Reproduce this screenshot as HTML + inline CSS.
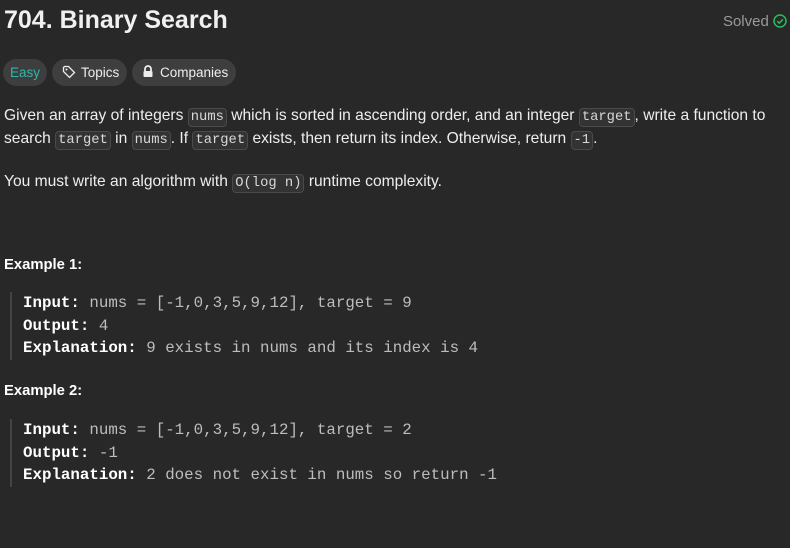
<!DOCTYPE html>
<html><head><style>
body{margin:0;background:#282828;width:790px;height:548px;overflow:hidden;font-family:"Liberation Sans",sans-serif;color:#eff1f6;position:relative}
.a{position:absolute;white-space:nowrap}
h1{position:absolute;left:4px;top:6px;margin:0;font-size:25px;font-weight:600;color:#f0f0f0}
.pill{position:absolute;top:59px;height:27px;border-radius:14px;background:#3e3e3e;font-size:13.5px;line-height:27px;color:#eee}
.p{font-size:15.6px;color:#eee;line-height:23px}
code{font-family:"Liberation Mono",monospace;font-size:13.8px;background:#333;border:1px solid #4a4a4a;border-radius:4px;padding:1px 2px;color:#d8d8d8}
.ex{font-size:14.8px;font-weight:bold;color:#fff}
.pre{position:absolute;left:10px;border-left:2px solid #444;padding-left:11px;font-family:"Liberation Mono",monospace;font-size:15.8px;line-height:22.5px;color:#bdbdbd;white-space:pre}
.pre b{color:#fff}
</style></head><body>
<h1>704. Binary Search</h1>
<div class="a" style="right:3px;top:13px;font-size:15px;color:#9a9a9a">Solved <svg width="14" height="14" viewBox="0 0 14 14" style="vertical-align:-2px"><circle cx="7" cy="7" r="6" fill="none" stroke="#2cbb5d" stroke-width="1.5"/><path d="M4.3 7.2l2 2 3.6-3.8" fill="none" stroke="#2cbb5d" stroke-width="1.5"/></svg></div>
<div class="pill" style="left:3px;width:44px;text-align:center;color:#2db8a8">Easy</div>
<div class="pill" style="left:52px;width:75px"><svg width="14" height="14" viewBox="0 0 14 14" style="position:absolute;left:10px;top:6px"><path d="M1.5 2.5v4l6 6 5-5-6-6h-4z" fill="none" stroke="#eee" stroke-width="1.3"/><circle cx="4.5" cy="4.5" r="1" fill="#eee"/></svg><span style="position:absolute;left:29px">Topics</span></div>
<div class="pill" style="left:132px;width:104px"><svg width="12" height="13" viewBox="0 0 12 13" style="position:absolute;left:10px;top:6px"><path d="M3 6V4a3 3 0 0 1 6 0v2" fill="none" stroke="#eee" stroke-width="1.8"/><rect x="1.5" y="6" width="9" height="6" rx="1" fill="#eee"/></svg><span style="position:absolute;left:28px">Companies</span></div>
<div class="a p" style="left:4px;top:104px">Given an array of integers <code>nums</code> which is sorted in ascending order, and an integer <code>target</code>, write a function to</div>
<div class="a p" style="left:4px;top:127px">search <code>target</code> in <code>nums</code>. If <code>target</code> exists, then return its index. Otherwise, return <code>-1</code>.</div>
<div class="a p" style="left:4px;top:170px">You must write an algorithm with <code>O(log n)</code> runtime complexity.</div>
<div class="a ex" style="left:4px;top:257px">Example 1:</div>
<div class="pre" style="top:292px"><b>Input:</b> nums = [-1,0,3,5,9,12], target = 9
<b>Output:</b> 4
<b>Explanation:</b> 9 exists in nums and its index is 4</div>
<div class="a ex" style="left:4px;top:383px">Example 2:</div>
<div class="pre" style="top:419px"><b>Input:</b> nums = [-1,0,3,5,9,12], target = 2
<b>Output:</b> -1
<b>Explanation:</b> 2 does not exist in nums so return -1</div>
</body></html>
